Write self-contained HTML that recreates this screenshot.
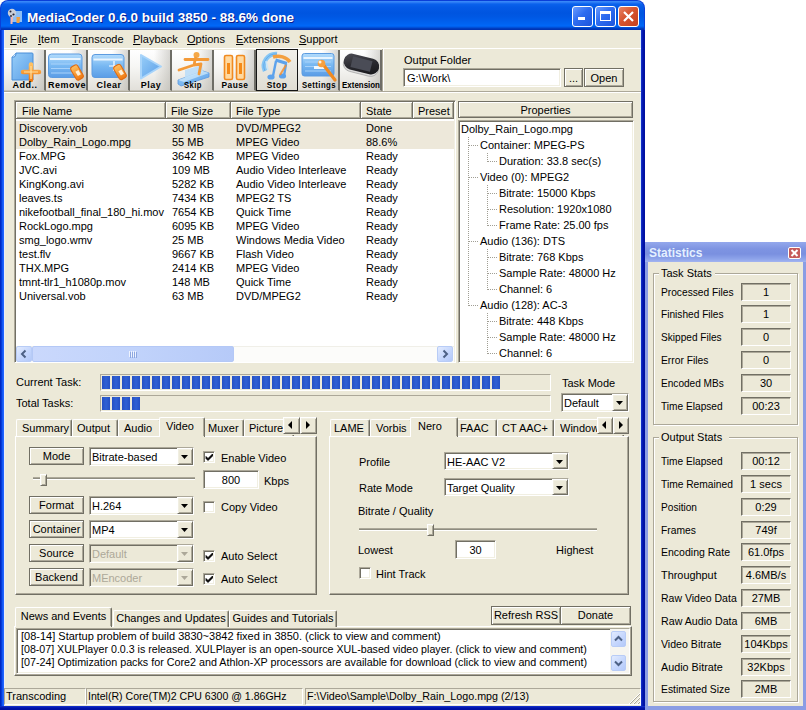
<!DOCTYPE html><html><head><meta charset="utf-8"><style>
html,body{margin:0;padding:0;}body{width:806px;height:710px;overflow:hidden;background:#fff;position:relative;font-family:"Liberation Sans",sans-serif;font-size:11px;color:#000;}
div,span,svg{position:absolute;box-sizing:border-box;}span{white-space:pre;}
</style></head><body>
<div style="left:0px;top:0px;width:645px;height:710px;background:#0A3FD8;border-radius:8px 8px 0 0;"></div>
<div style="left:1px;top:1px;width:643px;height:29px;border-radius:7px 7px 0 0;background:linear-gradient(to bottom,#3C8EFA 0px,#2A7AF4 1.5px,#0A62EC 3px,#045AE6 6px,#0055E0 12px,#0058E4 16px,#0062F0 22px,#0068F8 25px,#0050D8 26.5px,#0034B4 28px);"></div>
<div style="left:0px;top:30px;width:4px;height:680px;background:linear-gradient(to right,#0020C0 0px,#0030C8 1px,#0848E8 2px,#2064FF 3px,#2064FF 4px);"></div>
<div style="left:641px;top:30px;width:4px;height:680px;background:linear-gradient(to right,#1838C8 0px,#0A22C0 1px,#0014A8 2px,#0010A0 4px);"></div>
<div style="left:0px;top:706px;width:645px;height:4px;background:linear-gradient(to bottom,#1838C8 0px,#0A22C0 1px,#0014A8 2px,#0010A0 4px);"></div>
<div style="left:4px;top:30px;width:637px;height:676px;background:#ECE9D8;"></div>
<div style="left:4px;top:30px;width:1px;height:676px;background:#E8ECF8;"></div>
<div style="left:640px;top:30px;width:1px;height:676px;background:#D8ECF8;"></div>
<svg style="left:6px;top:7px" width="18" height="18"><rect x="6" y="4" width="10" height="11" fill="#9CCAF6" opacity="0.9"/><circle cx="6" cy="6" r="4.2" fill="#C9CED8"/><circle cx="4.5" cy="4.5" r="1" fill="#223"/><circle cx="7.5" cy="7.5" r="1.1" fill="#223"/><circle cx="5" cy="9" r="0.9" fill="#223"/><path d="M4.5 10L7 10L6.5 17L4.5 17Z" fill="#F2B8B0"/><path d="M10.5 10L14 10L13.5 16L10.5 16Z" fill="#F0A040"/></svg>
<span style="left:27px;top:11px;font-size:13.5px;line-height:13.5px;font-weight:bold;color:#fff;text-shadow:1px 1px #0A1E8C;">MediaCoder 0.6.0 build 3850 - 88.6% done</span>
<div style="left:572px;top:6px;width:21px;height:21px;border:1px solid #fff;border-radius:3px;background:linear-gradient(135deg,#6A9CFF 0%,#2E6CF0 45%,#1C55DC 100%);"></div>
<div style="left:578px;top:17px;width:7px;height:3px;background:#fff;"></div>
<div style="left:595px;top:6px;width:21px;height:21px;border:1px solid #fff;border-radius:3px;background:linear-gradient(135deg,#6A9CFF 0%,#2E6CF0 45%,#1C55DC 100%);"></div>
<div style="left:600px;top:11px;width:11px;height:10px;border:1px solid #fff;border-top:3px solid #fff;"></div>
<div style="left:618px;top:6px;width:21px;height:21px;border:1px solid #fff;border-radius:3px;background:linear-gradient(135deg,#E88466 0%,#D6542E 45%,#C4401E 100%);"></div>
<svg style="left:618px;top:6px" width="21" height="21"><path d="M6 6L15 15M15 6L6 15" stroke="#fff" stroke-width="2.2"/></svg>
<span style="left:10px;top:34px;font-size:11px;line-height:11px;"><u>F</u>ile</span>
<span style="left:38px;top:34px;font-size:11px;line-height:11px;"><u>I</u>tem</span>
<span style="left:72px;top:34px;font-size:11px;line-height:11px;"><u>T</u>ranscode</span>
<span style="left:133px;top:34px;font-size:11px;line-height:11px;"><u>P</u>layback</span>
<span style="left:187px;top:34px;font-size:11px;line-height:11px;"><u>O</u>ptions</span>
<span style="left:236px;top:34px;font-size:11px;line-height:11px;"><u>E</u>xtensions</span>
<span style="left:299px;top:34px;font-size:11px;line-height:11px;"><u>S</u>upport</span>
<div style="left:4px;top:48px;width:637px;height:1px;background:#fff;"></div>
<div style="left:4px;top:50px;width:42px;height:41px;background:linear-gradient(to right,rgba(255,255,255,0) 0%,rgba(255,255,255,0) 60%,rgba(170,168,160,0.45) 100%),linear-gradient(to bottom,#FFFFFF 0%,#F7F7F5 40%,#E2E0DA 100%);border-right:2px solid #6E6D66;border-bottom:1px solid #C8C5BA;"></div>
<svg style="left:4px;top:49px" width="42" height="42"><defs>
<linearGradient id="gb" x1="0" y1="0" x2="0" y2="1"><stop offset="0" stop-color="#B4DCFC"/><stop offset="0.5" stop-color="#78B8F2"/><stop offset="1" stop-color="#5A9CE6"/></linearGradient>
<linearGradient id="gb2" x1="0" y1="0" x2="1" y2="1"><stop offset="0" stop-color="#98CEF8"/><stop offset="1" stop-color="#5A9EE8"/></linearGradient>
<linearGradient id="go" x1="0" y1="0" x2="0" y2="1"><stop offset="0" stop-color="#FFC060"/><stop offset="1" stop-color="#F07810"/></linearGradient>
<linearGradient id="gp" x1="0" y1="0" x2="1" y2="1"><stop offset="0" stop-color="#505058"/><stop offset="0.5" stop-color="#2A2A30"/><stop offset="1" stop-color="#151518"/></linearGradient>
</defs><path d="M12 4H28Q29 4 29 5V31H8V8Z" fill="url(#gb2)" stroke="#4A8ED8" stroke-width="1"/><path d="M8 8Q12 9 12 4" fill="#CFE6FB" stroke="#4A8ED8" stroke-width="1"/><path d="M19 23H35M27 15.5V31" stroke="url(#go)" stroke-width="4.5" stroke-linecap="round"/><path d="M20 23H34M27 17V30" stroke="#FFE2A0" stroke-width="1.2"/></svg>
<span style="left:-6px;top:81px;font-size:9px;line-height:9px;width:62px;text-align:center;font-weight:bold;letter-spacing:0.5px;transform:scaleX(1);">Add..</span>
<div style="left:46px;top:50px;width:42px;height:41px;background:linear-gradient(to right,rgba(255,255,255,0) 0%,rgba(255,255,255,0) 60%,rgba(170,168,160,0.45) 100%),linear-gradient(to bottom,#FFFFFF 0%,#F7F7F5 40%,#E2E0DA 100%);border-right:2px solid #6E6D66;border-bottom:1px solid #C8C5BA;"></div>
<svg style="left:46px;top:49px" width="42" height="42"><defs>
<linearGradient id="gb" x1="0" y1="0" x2="0" y2="1"><stop offset="0" stop-color="#B4DCFC"/><stop offset="0.5" stop-color="#78B8F2"/><stop offset="1" stop-color="#5A9CE6"/></linearGradient>
<linearGradient id="gb2" x1="0" y1="0" x2="1" y2="1"><stop offset="0" stop-color="#98CEF8"/><stop offset="1" stop-color="#5A9EE8"/></linearGradient>
<linearGradient id="go" x1="0" y1="0" x2="0" y2="1"><stop offset="0" stop-color="#FFC060"/><stop offset="1" stop-color="#F07810"/></linearGradient>
<linearGradient id="gp" x1="0" y1="0" x2="1" y2="1"><stop offset="0" stop-color="#505058"/><stop offset="0.5" stop-color="#2A2A30"/><stop offset="1" stop-color="#151518"/></linearGradient>
</defs><rect x="2.5" y="5" width="33.5" height="23.5" rx="3" fill="url(#gb)" stroke="#5C9BE0" stroke-width="1"/><rect x="4" y="9" width="30.5" height="2" fill="#E8F4FE"/><path d="M5 15H33M5 19.5H33M5 24H30" stroke="#A8D2FA" stroke-width="1"/><rect x="27" y="16" width="8" height="15" rx="2.5" transform="rotate(-30 31 23.5)" fill="url(#go)" stroke="#E06A10" stroke-width="1"/><rect x="30" y="22" width="3.5" height="5" transform="rotate(-30 31 23.5)" fill="#FFF0D8"/></svg>
<span style="left:36px;top:81px;font-size:9px;line-height:9px;width:62px;text-align:center;font-weight:bold;letter-spacing:0.5px;transform:scaleX(1);">Remove</span>
<div style="left:88px;top:50px;width:42px;height:41px;background:linear-gradient(to right,rgba(255,255,255,0) 0%,rgba(255,255,255,0) 60%,rgba(170,168,160,0.45) 100%),linear-gradient(to bottom,#FFFFFF 0%,#F7F7F5 40%,#E2E0DA 100%);border-right:2px solid #6E6D66;border-bottom:1px solid #C8C5BA;"></div>
<svg style="left:88px;top:49px" width="42" height="42"><defs>
<linearGradient id="gb" x1="0" y1="0" x2="0" y2="1"><stop offset="0" stop-color="#B4DCFC"/><stop offset="0.5" stop-color="#78B8F2"/><stop offset="1" stop-color="#5A9CE6"/></linearGradient>
<linearGradient id="gb2" x1="0" y1="0" x2="1" y2="1"><stop offset="0" stop-color="#98CEF8"/><stop offset="1" stop-color="#5A9EE8"/></linearGradient>
<linearGradient id="go" x1="0" y1="0" x2="0" y2="1"><stop offset="0" stop-color="#FFC060"/><stop offset="1" stop-color="#F07810"/></linearGradient>
<linearGradient id="gp" x1="0" y1="0" x2="1" y2="1"><stop offset="0" stop-color="#505058"/><stop offset="0.5" stop-color="#2A2A30"/><stop offset="1" stop-color="#151518"/></linearGradient>
</defs><rect x="4" y="5.5" width="32" height="23" rx="3" fill="url(#gb)" stroke="#5C9BE0" stroke-width="1"/><rect x="5.5" y="9.5" width="29" height="2" fill="#E8F4FE"/><path d="M26 12V22M21 17H31" stroke="#FFFFFF" stroke-width="1.2"/><rect x="28" y="15.5" width="8" height="15" rx="2.5" transform="rotate(-30 32 23)" fill="url(#go)" stroke="#E06A10" stroke-width="1"/><rect x="31" y="21.5" width="3.5" height="5" transform="rotate(-30 32 23)" fill="#FFF0D8"/></svg>
<span style="left:78px;top:81px;font-size:9px;line-height:9px;width:62px;text-align:center;font-weight:bold;letter-spacing:0.5px;transform:scaleX(1);">Clear</span>
<div style="left:130px;top:50px;width:42px;height:41px;background:linear-gradient(to right,rgba(255,255,255,0) 0%,rgba(255,255,255,0) 60%,rgba(170,168,160,0.45) 100%),linear-gradient(to bottom,#FFFFFF 0%,#F7F7F5 40%,#E2E0DA 100%);border-right:2px solid #6E6D66;border-bottom:1px solid #C8C5BA;"></div>
<svg style="left:130px;top:49px" width="42" height="42"><defs>
<linearGradient id="gb" x1="0" y1="0" x2="0" y2="1"><stop offset="0" stop-color="#B4DCFC"/><stop offset="0.5" stop-color="#78B8F2"/><stop offset="1" stop-color="#5A9CE6"/></linearGradient>
<linearGradient id="gb2" x1="0" y1="0" x2="1" y2="1"><stop offset="0" stop-color="#98CEF8"/><stop offset="1" stop-color="#5A9EE8"/></linearGradient>
<linearGradient id="go" x1="0" y1="0" x2="0" y2="1"><stop offset="0" stop-color="#FFC060"/><stop offset="1" stop-color="#F07810"/></linearGradient>
<linearGradient id="gp" x1="0" y1="0" x2="1" y2="1"><stop offset="0" stop-color="#505058"/><stop offset="0.5" stop-color="#2A2A30"/><stop offset="1" stop-color="#151518"/></linearGradient>
</defs><path d="M11 6L31 17.5L11 29.5Z" fill="url(#gb2)" stroke="#A8D4FA" stroke-width="2" stroke-linejoin="round"/></svg>
<span style="left:120px;top:81px;font-size:9px;line-height:9px;width:62px;text-align:center;font-weight:bold;letter-spacing:0.5px;transform:scaleX(1);">Play</span>
<div style="left:172px;top:50px;width:42px;height:41px;background:linear-gradient(to right,rgba(255,255,255,0) 0%,rgba(255,255,255,0) 60%,rgba(170,168,160,0.45) 100%),linear-gradient(to bottom,#FFFFFF 0%,#F7F7F5 40%,#E2E0DA 100%);border-right:2px solid #6E6D66;border-bottom:1px solid #C8C5BA;"></div>
<svg style="left:172px;top:49px" width="42" height="42"><defs>
<linearGradient id="gb" x1="0" y1="0" x2="0" y2="1"><stop offset="0" stop-color="#B4DCFC"/><stop offset="0.5" stop-color="#78B8F2"/><stop offset="1" stop-color="#5A9CE6"/></linearGradient>
<linearGradient id="gb2" x1="0" y1="0" x2="1" y2="1"><stop offset="0" stop-color="#98CEF8"/><stop offset="1" stop-color="#5A9EE8"/></linearGradient>
<linearGradient id="go" x1="0" y1="0" x2="0" y2="1"><stop offset="0" stop-color="#FFC060"/><stop offset="1" stop-color="#F07810"/></linearGradient>
<linearGradient id="gp" x1="0" y1="0" x2="1" y2="1"><stop offset="0" stop-color="#505058"/><stop offset="0.5" stop-color="#2A2A30"/><stop offset="1" stop-color="#151518"/></linearGradient>
</defs><path d="M6 31L31 22L37 24V28L9 37L6 35Z" fill="url(#gb2)" stroke="#5A98E0" stroke-width="0.8"/><path d="M13 21L30 16L31 23L13 29Z" fill="#B8DCF8" opacity="0.85"/><path d="M6 31L31 22L37 24L12 33Z" fill="#D4ECFC" opacity="0.7"/><circle cx="24.5" cy="6" r="3" fill="#F5A848"/><path d="M13 10.5H36M23.5 9L22 16L7 21M22 16L29 15L27 25" stroke="#F39A38" stroke-width="2.8" stroke-linecap="round" stroke-linejoin="round" fill="none"/></svg>
<span style="left:162px;top:81px;font-size:9px;line-height:9px;width:62px;text-align:center;font-weight:bold;letter-spacing:0.5px;transform:scaleX(0.85);">Skip</span>
<div style="left:214px;top:50px;width:42px;height:41px;background:linear-gradient(to right,rgba(255,255,255,0) 0%,rgba(255,255,255,0) 60%,rgba(170,168,160,0.45) 100%),linear-gradient(to bottom,#FFFFFF 0%,#F7F7F5 40%,#E2E0DA 100%);border-right:2px solid #6E6D66;border-bottom:1px solid #C8C5BA;"></div>
<svg style="left:214px;top:49px" width="42" height="42"><defs>
<linearGradient id="gb" x1="0" y1="0" x2="0" y2="1"><stop offset="0" stop-color="#B4DCFC"/><stop offset="0.5" stop-color="#78B8F2"/><stop offset="1" stop-color="#5A9CE6"/></linearGradient>
<linearGradient id="gb2" x1="0" y1="0" x2="1" y2="1"><stop offset="0" stop-color="#98CEF8"/><stop offset="1" stop-color="#5A9EE8"/></linearGradient>
<linearGradient id="go" x1="0" y1="0" x2="0" y2="1"><stop offset="0" stop-color="#FFC060"/><stop offset="1" stop-color="#F07810"/></linearGradient>
<linearGradient id="gp" x1="0" y1="0" x2="1" y2="1"><stop offset="0" stop-color="#505058"/><stop offset="0.5" stop-color="#2A2A30"/><stop offset="1" stop-color="#151518"/></linearGradient>
</defs><rect x="10.5" y="6.5" width="8" height="24" rx="1.5" fill="#FFD9A0" stroke="#F08A20" stroke-width="1.6"/><rect x="22.5" y="6.5" width="8" height="24" rx="1.5" fill="#FFD9A0" stroke="#F08A20" stroke-width="1.6"/><path d="M14.5 14V25M26.5 14V25" stroke="#F58A18" stroke-width="3"/></svg>
<span style="left:204px;top:81px;font-size:9px;line-height:9px;width:62px;text-align:center;font-weight:bold;letter-spacing:0.5px;transform:scaleX(0.93);">Pause</span>
<div style="left:256px;top:49px;width:42px;height:42px;background:linear-gradient(to bottom,#F0EFEA,#E0DDD3);border:1px solid #141414;"></div>
<svg style="left:256px;top:49px" width="42" height="42"><defs>
<linearGradient id="gb" x1="0" y1="0" x2="0" y2="1"><stop offset="0" stop-color="#B4DCFC"/><stop offset="0.5" stop-color="#78B8F2"/><stop offset="1" stop-color="#5A9CE6"/></linearGradient>
<linearGradient id="gb2" x1="0" y1="0" x2="1" y2="1"><stop offset="0" stop-color="#98CEF8"/><stop offset="1" stop-color="#5A9EE8"/></linearGradient>
<linearGradient id="go" x1="0" y1="0" x2="0" y2="1"><stop offset="0" stop-color="#FFC060"/><stop offset="1" stop-color="#F07810"/></linearGradient>
<linearGradient id="gp" x1="0" y1="0" x2="1" y2="1"><stop offset="0" stop-color="#505058"/><stop offset="0.5" stop-color="#2A2A30"/><stop offset="1" stop-color="#151518"/></linearGradient>
</defs><path d="M9 22A12 12 0 0 1 21 5" stroke="#86C6F4" stroke-width="4.5" fill="none"/><path d="M9 22A12 12 0 0 1 21 5" stroke="#4E9AE6" stroke-width="1" fill="none" opacity="0.6"/><path d="M17 8A14 12 0 0 1 34 13" stroke="#F4A040" stroke-width="3.5" fill="none"/><path d="M20 12L17 27M30 15L28 27" stroke="#5CA2EC" stroke-width="2.4"/><path d="M19.5 11L31 14.5" stroke="#5CA2EC" stroke-width="3.2"/><ellipse cx="15" cy="28" rx="3.6" ry="2.6" fill="#5CA2EC"/><ellipse cx="26.5" cy="27" rx="3.6" ry="2.6" fill="#5CA2EC"/><path d="M30 16L24 26" stroke="#F49030" stroke-width="2" opacity="0.85"/><path d="M12 21L10 12" stroke="#C8E6FA" stroke-width="1.5" fill="none"/></svg>
<span style="left:246px;top:81px;font-size:9px;line-height:9px;width:62px;text-align:center;font-weight:bold;letter-spacing:0.5px;transform:scaleX(0.93);">Stop</span>
<div style="left:298px;top:50px;width:42px;height:41px;background:linear-gradient(to right,rgba(255,255,255,0) 0%,rgba(255,255,255,0) 60%,rgba(170,168,160,0.45) 100%),linear-gradient(to bottom,#FFFFFF 0%,#F7F7F5 40%,#E2E0DA 100%);border-right:2px solid #6E6D66;border-bottom:1px solid #C8C5BA;"></div>
<svg style="left:298px;top:49px" width="42" height="42"><defs>
<linearGradient id="gb" x1="0" y1="0" x2="0" y2="1"><stop offset="0" stop-color="#B4DCFC"/><stop offset="0.5" stop-color="#78B8F2"/><stop offset="1" stop-color="#5A9CE6"/></linearGradient>
<linearGradient id="gb2" x1="0" y1="0" x2="1" y2="1"><stop offset="0" stop-color="#98CEF8"/><stop offset="1" stop-color="#5A9EE8"/></linearGradient>
<linearGradient id="go" x1="0" y1="0" x2="0" y2="1"><stop offset="0" stop-color="#FFC060"/><stop offset="1" stop-color="#F07810"/></linearGradient>
<linearGradient id="gp" x1="0" y1="0" x2="1" y2="1"><stop offset="0" stop-color="#505058"/><stop offset="0.5" stop-color="#2A2A30"/><stop offset="1" stop-color="#151518"/></linearGradient>
</defs><rect x="4" y="4.5" width="32" height="22.5" rx="2.5" fill="url(#gb)" stroke="#5C9BE0" stroke-width="1"/><rect x="5.5" y="8" width="29" height="2" fill="#E8F4FE"/><path d="M7 13H33M7 17.5H33M7 22H33" stroke="#A8D2FA" stroke-width="1"/><path d="M16 18.5H27" stroke="#F0F8FF" stroke-width="3"/><path d="M24 14L37 31" stroke="#F08A20" stroke-width="3.2" stroke-linecap="round"/><circle cx="23.5" cy="14.5" r="3.8" fill="#F6A040"/><circle cx="22" cy="13" r="1.5" fill="#FFF2DA"/></svg>
<span style="left:288px;top:81px;font-size:9px;line-height:9px;width:62px;text-align:center;font-weight:bold;letter-spacing:0.5px;transform:scaleX(0.86);">Settings</span>
<div style="left:340px;top:50px;width:42px;height:41px;background:linear-gradient(to right,rgba(255,255,255,0) 0%,rgba(255,255,255,0) 60%,rgba(170,168,160,0.45) 100%),linear-gradient(to bottom,#FFFFFF 0%,#F7F7F5 40%,#E2E0DA 100%);border-right:2px solid #6E6D66;border-bottom:1px solid #C8C5BA;"></div>
<svg style="left:340px;top:49px" width="42" height="42"><defs>
<linearGradient id="gb" x1="0" y1="0" x2="0" y2="1"><stop offset="0" stop-color="#B4DCFC"/><stop offset="0.5" stop-color="#78B8F2"/><stop offset="1" stop-color="#5A9CE6"/></linearGradient>
<linearGradient id="gb2" x1="0" y1="0" x2="1" y2="1"><stop offset="0" stop-color="#98CEF8"/><stop offset="1" stop-color="#5A9EE8"/></linearGradient>
<linearGradient id="go" x1="0" y1="0" x2="0" y2="1"><stop offset="0" stop-color="#FFC060"/><stop offset="1" stop-color="#F07810"/></linearGradient>
<linearGradient id="gp" x1="0" y1="0" x2="1" y2="1"><stop offset="0" stop-color="#505058"/><stop offset="0.5" stop-color="#2A2A30"/><stop offset="1" stop-color="#151518"/></linearGradient>
</defs><g transform="rotate(14 21 17)"><rect x="3" y="9" width="36" height="16" rx="8" fill="#DCDCDC" stroke="#AAAAAA" stroke-width="0.8"/><rect x="3" y="7" width="36" height="16" rx="8" fill="url(#gp)"/><rect x="11" y="9.5" width="20" height="11" fill="#4A4C56"/></g></svg>
<span style="left:330px;top:81px;font-size:9px;line-height:9px;width:62px;text-align:center;font-weight:bold;letter-spacing:0px;transform:scaleX(0.88);">Extension</span>
<div style="left:382px;top:49px;width:1px;height:42px;background:#ACA899;"></div>
<div style="left:383px;top:49px;width:1px;height:42px;background:#fff;"></div>
<div style="left:4px;top:91px;width:637px;height:1px;background:#ACA899;"></div>
<div style="left:4px;top:92px;width:637px;height:1px;background:#fff;"></div>
<span style="left:404px;top:55px;font-size:11px;line-height:11px;">Output Folder</span>
<div style="left:403px;top:68px;width:158px;height:19px;border:1px solid;border-color:#ACA899 #fff #fff #ACA899;box-shadow:inset 1px 1px #716F64,inset -1px -1px #F1EFE2;background:#fff;"></div>
<span style="left:407px;top:73px;font-size:11px;line-height:11px;">G:\Work\</span>
<div style="left:564px;top:68px;width:19px;height:19px;border:1px solid #716F64;box-shadow:inset 1px 1px #fff,inset -1px -1px #ACA899;background:#ECE9D8;"></div>
<span style="left:564px;top:73px;font-size:11px;line-height:11px;width:19px;text-align:center;">...</span>
<div style="left:584px;top:68px;width:40px;height:19px;border:1px solid #716F64;box-shadow:inset 1px 1px #fff,inset -1px -1px #ACA899;background:#ECE9D8;"></div>
<span style="left:584px;top:73px;font-size:11px;line-height:11px;width:40px;text-align:center;">Open</span>
<div style="left:14px;top:100px;width:442px;height:263px;border:1px solid;border-color:#ACA899 #fff #fff #ACA899;box-shadow:inset 1px 1px #716F64,inset -1px -1px #F1EFE2;background:#fff;"></div>
<div style="left:16px;top:102px;width:150px;height:17px;background:#ECE9D8;border-right:1px solid #716F64;border-bottom:1px solid #716F64;box-shadow:inset 1px 1px #fff,inset -1px -1px #ACA899;"></div>
<span style="left:22px;top:106px;font-size:11px;line-height:11px;">File Name</span>
<div style="left:166px;top:102px;width:65px;height:17px;background:#ECE9D8;border-right:1px solid #716F64;border-bottom:1px solid #716F64;box-shadow:inset 1px 1px #fff,inset -1px -1px #ACA899;"></div>
<span style="left:171px;top:106px;font-size:11px;line-height:11px;">File Size</span>
<div style="left:231px;top:102px;width:130px;height:17px;background:#ECE9D8;border-right:1px solid #716F64;border-bottom:1px solid #716F64;box-shadow:inset 1px 1px #fff,inset -1px -1px #ACA899;"></div>
<span style="left:236px;top:106px;font-size:11px;line-height:11px;">File Type</span>
<div style="left:361px;top:102px;width:52px;height:17px;background:#ECE9D8;border-right:1px solid #716F64;border-bottom:1px solid #716F64;box-shadow:inset 1px 1px #fff,inset -1px -1px #ACA899;"></div>
<span style="left:366px;top:106px;font-size:11px;line-height:11px;">State</span>
<div style="left:413px;top:102px;width:41px;height:17px;background:#ECE9D8;border-right:1px solid #716F64;border-bottom:1px solid #716F64;box-shadow:inset 1px 1px #fff,inset -1px -1px #ACA899;"></div>
<span style="left:418px;top:106px;font-size:11px;line-height:11px;">Preset</span>
<div style="left:16px;top:121px;width:438px;height:28px;background:#EDE8DA;"></div>
<span style="left:19px;top:123px;font-size:11px;line-height:11px;">Discovery.vob</span>
<span style="left:172px;top:123px;font-size:11px;line-height:11px;">30 MB</span>
<span style="left:236px;top:123px;font-size:11px;line-height:11px;">DVD/MPEG2</span>
<span style="left:366px;top:123px;font-size:11px;line-height:11px;">Done</span>
<span style="left:19px;top:137px;font-size:11px;line-height:11px;">Dolby_Rain_Logo.mpg</span>
<span style="left:172px;top:137px;font-size:11px;line-height:11px;">55 MB</span>
<span style="left:236px;top:137px;font-size:11px;line-height:11px;">MPEG Video</span>
<span style="left:366px;top:137px;font-size:11px;line-height:11px;">88.6%</span>
<span style="left:19px;top:151px;font-size:11px;line-height:11px;">Fox.MPG</span>
<span style="left:172px;top:151px;font-size:11px;line-height:11px;">3642 KB</span>
<span style="left:236px;top:151px;font-size:11px;line-height:11px;">MPEG Video</span>
<span style="left:366px;top:151px;font-size:11px;line-height:11px;">Ready</span>
<span style="left:19px;top:165px;font-size:11px;line-height:11px;">JVC.avi</span>
<span style="left:172px;top:165px;font-size:11px;line-height:11px;">109 MB</span>
<span style="left:236px;top:165px;font-size:11px;line-height:11px;">Audio Video Interleave</span>
<span style="left:366px;top:165px;font-size:11px;line-height:11px;">Ready</span>
<span style="left:19px;top:179px;font-size:11px;line-height:11px;">KingKong.avi</span>
<span style="left:172px;top:179px;font-size:11px;line-height:11px;">5282 KB</span>
<span style="left:236px;top:179px;font-size:11px;line-height:11px;">Audio Video Interleave</span>
<span style="left:366px;top:179px;font-size:11px;line-height:11px;">Ready</span>
<span style="left:19px;top:193px;font-size:11px;line-height:11px;">leaves.ts</span>
<span style="left:172px;top:193px;font-size:11px;line-height:11px;">7434 KB</span>
<span style="left:236px;top:193px;font-size:11px;line-height:11px;">MPEG2 TS</span>
<span style="left:366px;top:193px;font-size:11px;line-height:11px;">Ready</span>
<span style="left:19px;top:207px;font-size:11px;line-height:11px;">nikefootball_final_180_hi.mov</span>
<span style="left:172px;top:207px;font-size:11px;line-height:11px;">7654 KB</span>
<span style="left:236px;top:207px;font-size:11px;line-height:11px;">Quick Time</span>
<span style="left:366px;top:207px;font-size:11px;line-height:11px;">Ready</span>
<span style="left:19px;top:221px;font-size:11px;line-height:11px;">RockLogo.mpg</span>
<span style="left:172px;top:221px;font-size:11px;line-height:11px;">6095 KB</span>
<span style="left:236px;top:221px;font-size:11px;line-height:11px;">MPEG Video</span>
<span style="left:366px;top:221px;font-size:11px;line-height:11px;">Ready</span>
<span style="left:19px;top:235px;font-size:11px;line-height:11px;">smg_logo.wmv</span>
<span style="left:172px;top:235px;font-size:11px;line-height:11px;">25 MB</span>
<span style="left:236px;top:235px;font-size:11px;line-height:11px;">Windows Media Video</span>
<span style="left:366px;top:235px;font-size:11px;line-height:11px;">Ready</span>
<span style="left:19px;top:249px;font-size:11px;line-height:11px;">test.flv</span>
<span style="left:172px;top:249px;font-size:11px;line-height:11px;">9667 KB</span>
<span style="left:236px;top:249px;font-size:11px;line-height:11px;">Flash Video</span>
<span style="left:366px;top:249px;font-size:11px;line-height:11px;">Ready</span>
<span style="left:19px;top:263px;font-size:11px;line-height:11px;">THX.MPG</span>
<span style="left:172px;top:263px;font-size:11px;line-height:11px;">2414 KB</span>
<span style="left:236px;top:263px;font-size:11px;line-height:11px;">MPEG Video</span>
<span style="left:366px;top:263px;font-size:11px;line-height:11px;">Ready</span>
<span style="left:19px;top:277px;font-size:11px;line-height:11px;">tmnt-tlr1_h1080p.mov</span>
<span style="left:172px;top:277px;font-size:11px;line-height:11px;">148 MB</span>
<span style="left:236px;top:277px;font-size:11px;line-height:11px;">Quick Time</span>
<span style="left:366px;top:277px;font-size:11px;line-height:11px;">Ready</span>
<span style="left:19px;top:291px;font-size:11px;line-height:11px;">Universal.vob</span>
<span style="left:172px;top:291px;font-size:11px;line-height:11px;">63 MB</span>
<span style="left:236px;top:291px;font-size:11px;line-height:11px;">DVD/MPEG2</span>
<span style="left:366px;top:291px;font-size:11px;line-height:11px;">Ready</span>
<div style="left:16px;top:346px;width:438px;height:16px;background:#FCFCFA;border-top:1px solid #F0EFE8;"></div>
<div style="left:16px;top:346px;width:16px;height:16px;border:1px solid #B8CCF6;border-radius:2px;background:linear-gradient(135deg,#E2EBFE 0%,#C3D5FD 60%,#B4C9F9 100%);"></div>
<svg style="left:0;top:0" width="806" height="710"><path d="M25.5 350.5 L22.0 354.0 L25.5 357.5" stroke="#4D6185" stroke-width="2" fill="none"/></svg>
<div style="left:32px;top:346px;width:202px;height:16px;border:1px solid #B4C8F6;border-radius:2px;background:linear-gradient(to right,#CAD8FC,#C1D3FB 50%,#B6CAF8);"></div>
<div style="left:129px;top:351px;width:1px;height:6px;background:#EEF3FE;"></div>
<div style="left:130px;top:352px;width:1px;height:6px;background:#8CA6E0;"></div>
<div style="left:131px;top:351px;width:1px;height:6px;background:#EEF3FE;"></div>
<div style="left:132px;top:352px;width:1px;height:6px;background:#8CA6E0;"></div>
<div style="left:133px;top:351px;width:1px;height:6px;background:#EEF3FE;"></div>
<div style="left:134px;top:352px;width:1px;height:6px;background:#8CA6E0;"></div>
<div style="left:135px;top:351px;width:1px;height:6px;background:#EEF3FE;"></div>
<div style="left:136px;top:352px;width:1px;height:6px;background:#8CA6E0;"></div>
<div style="left:437px;top:346px;width:16px;height:16px;border:1px solid #B8CCF6;border-radius:2px;background:linear-gradient(135deg,#E2EBFE 0%,#C3D5FD 60%,#B4C9F9 100%);"></div>
<svg style="left:0;top:0" width="806" height="710"><path d="M443.5 350.5 L447.0 354.0 L443.5 357.5" stroke="#4D6185" stroke-width="2" fill="none"/></svg>
<div style="left:458px;top:101px;width:175px;height:17px;border:1px solid #716F64;box-shadow:inset 1px 1px #fff,inset -1px -1px #ACA899;background:#ECE9D8;"></div>
<span style="left:458px;top:105px;font-size:11px;line-height:11px;width:175px;text-align:center;">Properties</span>
<div style="left:458px;top:120px;width:176px;height:243px;border:1px solid;border-color:#ACA899 #fff #fff #ACA899;box-shadow:inset 1px 1px #716F64,inset -1px -1px #F1EFE2;background:#fff;"></div>
<span style="left:461px;top:124px;font-size:11px;line-height:11px;">Dolby_Rain_Logo.mpg</span>
<span style="left:480px;top:140px;font-size:11px;line-height:11px;">Container: MPEG-PS</span>
<span style="left:499px;top:156px;font-size:11px;line-height:11px;">Duration: 33.8 sec(s)</span>
<span style="left:480px;top:172px;font-size:11px;line-height:11px;">Video (0): MPEG2</span>
<span style="left:499px;top:188px;font-size:11px;line-height:11px;">Bitrate: 15000 Kbps</span>
<span style="left:499px;top:204px;font-size:11px;line-height:11px;">Resolution: 1920x1080</span>
<span style="left:499px;top:220px;font-size:11px;line-height:11px;">Frame Rate: 25.00 fps</span>
<span style="left:480px;top:236px;font-size:11px;line-height:11px;">Audio (136): DTS</span>
<span style="left:499px;top:252px;font-size:11px;line-height:11px;">Bitrate: 768 Kbps</span>
<span style="left:499px;top:268px;font-size:11px;line-height:11px;">Sample Rate: 48000 Hz</span>
<span style="left:499px;top:284px;font-size:11px;line-height:11px;">Channel: 6</span>
<span style="left:480px;top:300px;font-size:11px;line-height:11px;">Audio (128): AC-3</span>
<span style="left:499px;top:316px;font-size:11px;line-height:11px;">Bitrate: 448 Kbps</span>
<span style="left:499px;top:332px;font-size:11px;line-height:11px;">Sample Rate: 48000 Hz</span>
<span style="left:499px;top:348px;font-size:11px;line-height:11px;">Channel: 6</span>
<div style="left:468px;top:137px;width:1px;height:169px;background:repeating-linear-gradient(to bottom,#A09E94 0 1px,transparent 1px 2px);"></div>
<div style="left:469px;top:145px;width:10px;height:1px;background:repeating-linear-gradient(to right,#A09E94 0 1px,transparent 1px 2px);"></div>
<div style="left:488px;top:161px;width:10px;height:1px;background:repeating-linear-gradient(to right,#A09E94 0 1px,transparent 1px 2px);"></div>
<div style="left:469px;top:177px;width:10px;height:1px;background:repeating-linear-gradient(to right,#A09E94 0 1px,transparent 1px 2px);"></div>
<div style="left:488px;top:193px;width:10px;height:1px;background:repeating-linear-gradient(to right,#A09E94 0 1px,transparent 1px 2px);"></div>
<div style="left:488px;top:209px;width:10px;height:1px;background:repeating-linear-gradient(to right,#A09E94 0 1px,transparent 1px 2px);"></div>
<div style="left:488px;top:225px;width:10px;height:1px;background:repeating-linear-gradient(to right,#A09E94 0 1px,transparent 1px 2px);"></div>
<div style="left:469px;top:241px;width:10px;height:1px;background:repeating-linear-gradient(to right,#A09E94 0 1px,transparent 1px 2px);"></div>
<div style="left:488px;top:257px;width:10px;height:1px;background:repeating-linear-gradient(to right,#A09E94 0 1px,transparent 1px 2px);"></div>
<div style="left:488px;top:273px;width:10px;height:1px;background:repeating-linear-gradient(to right,#A09E94 0 1px,transparent 1px 2px);"></div>
<div style="left:488px;top:289px;width:10px;height:1px;background:repeating-linear-gradient(to right,#A09E94 0 1px,transparent 1px 2px);"></div>
<div style="left:469px;top:305px;width:10px;height:1px;background:repeating-linear-gradient(to right,#A09E94 0 1px,transparent 1px 2px);"></div>
<div style="left:488px;top:321px;width:10px;height:1px;background:repeating-linear-gradient(to right,#A09E94 0 1px,transparent 1px 2px);"></div>
<div style="left:488px;top:337px;width:10px;height:1px;background:repeating-linear-gradient(to right,#A09E94 0 1px,transparent 1px 2px);"></div>
<div style="left:488px;top:353px;width:10px;height:1px;background:repeating-linear-gradient(to right,#A09E94 0 1px,transparent 1px 2px);"></div>
<div style="left:487px;top:153px;width:1px;height:9px;background:repeating-linear-gradient(to bottom,#A09E94 0 1px,transparent 1px 2px);"></div>
<div style="left:487px;top:185px;width:1px;height:41px;background:repeating-linear-gradient(to bottom,#A09E94 0 1px,transparent 1px 2px);"></div>
<div style="left:487px;top:249px;width:1px;height:41px;background:repeating-linear-gradient(to bottom,#A09E94 0 1px,transparent 1px 2px);"></div>
<div style="left:487px;top:313px;width:1px;height:41px;background:repeating-linear-gradient(to bottom,#A09E94 0 1px,transparent 1px 2px);"></div>
<span style="left:16px;top:377px;font-size:11px;line-height:11px;">Current Task:</span>
<span style="left:16px;top:398px;font-size:11px;line-height:11px;">Total Tasks:</span>
<div style="left:100px;top:374px;width:451px;height:17px;border:1px solid;border-color:#ACA899 #fff #fff #ACA899;"></div>
<div style="left:102px;top:376px;width:8px;height:13px;background:linear-gradient(to right,#2550C4,#2F60D4 50%,#2550C4);"></div>
<div style="left:112px;top:376px;width:8px;height:13px;background:linear-gradient(to right,#2550C4,#2F60D4 50%,#2550C4);"></div>
<div style="left:122px;top:376px;width:8px;height:13px;background:linear-gradient(to right,#2550C4,#2F60D4 50%,#2550C4);"></div>
<div style="left:132px;top:376px;width:8px;height:13px;background:linear-gradient(to right,#2550C4,#2F60D4 50%,#2550C4);"></div>
<div style="left:142px;top:376px;width:8px;height:13px;background:linear-gradient(to right,#2550C4,#2F60D4 50%,#2550C4);"></div>
<div style="left:152px;top:376px;width:8px;height:13px;background:linear-gradient(to right,#2550C4,#2F60D4 50%,#2550C4);"></div>
<div style="left:162px;top:376px;width:8px;height:13px;background:linear-gradient(to right,#2550C4,#2F60D4 50%,#2550C4);"></div>
<div style="left:172px;top:376px;width:8px;height:13px;background:linear-gradient(to right,#2550C4,#2F60D4 50%,#2550C4);"></div>
<div style="left:182px;top:376px;width:8px;height:13px;background:linear-gradient(to right,#2550C4,#2F60D4 50%,#2550C4);"></div>
<div style="left:192px;top:376px;width:8px;height:13px;background:linear-gradient(to right,#2550C4,#2F60D4 50%,#2550C4);"></div>
<div style="left:202px;top:376px;width:8px;height:13px;background:linear-gradient(to right,#2550C4,#2F60D4 50%,#2550C4);"></div>
<div style="left:212px;top:376px;width:8px;height:13px;background:linear-gradient(to right,#2550C4,#2F60D4 50%,#2550C4);"></div>
<div style="left:222px;top:376px;width:8px;height:13px;background:linear-gradient(to right,#2550C4,#2F60D4 50%,#2550C4);"></div>
<div style="left:232px;top:376px;width:8px;height:13px;background:linear-gradient(to right,#2550C4,#2F60D4 50%,#2550C4);"></div>
<div style="left:242px;top:376px;width:8px;height:13px;background:linear-gradient(to right,#2550C4,#2F60D4 50%,#2550C4);"></div>
<div style="left:252px;top:376px;width:8px;height:13px;background:linear-gradient(to right,#2550C4,#2F60D4 50%,#2550C4);"></div>
<div style="left:262px;top:376px;width:8px;height:13px;background:linear-gradient(to right,#2550C4,#2F60D4 50%,#2550C4);"></div>
<div style="left:272px;top:376px;width:8px;height:13px;background:linear-gradient(to right,#2550C4,#2F60D4 50%,#2550C4);"></div>
<div style="left:282px;top:376px;width:8px;height:13px;background:linear-gradient(to right,#2550C4,#2F60D4 50%,#2550C4);"></div>
<div style="left:292px;top:376px;width:8px;height:13px;background:linear-gradient(to right,#2550C4,#2F60D4 50%,#2550C4);"></div>
<div style="left:302px;top:376px;width:8px;height:13px;background:linear-gradient(to right,#2550C4,#2F60D4 50%,#2550C4);"></div>
<div style="left:312px;top:376px;width:8px;height:13px;background:linear-gradient(to right,#2550C4,#2F60D4 50%,#2550C4);"></div>
<div style="left:322px;top:376px;width:8px;height:13px;background:linear-gradient(to right,#2550C4,#2F60D4 50%,#2550C4);"></div>
<div style="left:332px;top:376px;width:8px;height:13px;background:linear-gradient(to right,#2550C4,#2F60D4 50%,#2550C4);"></div>
<div style="left:342px;top:376px;width:8px;height:13px;background:linear-gradient(to right,#2550C4,#2F60D4 50%,#2550C4);"></div>
<div style="left:352px;top:376px;width:8px;height:13px;background:linear-gradient(to right,#2550C4,#2F60D4 50%,#2550C4);"></div>
<div style="left:362px;top:376px;width:8px;height:13px;background:linear-gradient(to right,#2550C4,#2F60D4 50%,#2550C4);"></div>
<div style="left:372px;top:376px;width:8px;height:13px;background:linear-gradient(to right,#2550C4,#2F60D4 50%,#2550C4);"></div>
<div style="left:382px;top:376px;width:8px;height:13px;background:linear-gradient(to right,#2550C4,#2F60D4 50%,#2550C4);"></div>
<div style="left:392px;top:376px;width:8px;height:13px;background:linear-gradient(to right,#2550C4,#2F60D4 50%,#2550C4);"></div>
<div style="left:402px;top:376px;width:8px;height:13px;background:linear-gradient(to right,#2550C4,#2F60D4 50%,#2550C4);"></div>
<div style="left:412px;top:376px;width:8px;height:13px;background:linear-gradient(to right,#2550C4,#2F60D4 50%,#2550C4);"></div>
<div style="left:422px;top:376px;width:8px;height:13px;background:linear-gradient(to right,#2550C4,#2F60D4 50%,#2550C4);"></div>
<div style="left:432px;top:376px;width:8px;height:13px;background:linear-gradient(to right,#2550C4,#2F60D4 50%,#2550C4);"></div>
<div style="left:442px;top:376px;width:8px;height:13px;background:linear-gradient(to right,#2550C4,#2F60D4 50%,#2550C4);"></div>
<div style="left:452px;top:376px;width:8px;height:13px;background:linear-gradient(to right,#2550C4,#2F60D4 50%,#2550C4);"></div>
<div style="left:462px;top:376px;width:8px;height:13px;background:linear-gradient(to right,#2550C4,#2F60D4 50%,#2550C4);"></div>
<div style="left:472px;top:376px;width:8px;height:13px;background:linear-gradient(to right,#2550C4,#2F60D4 50%,#2550C4);"></div>
<div style="left:482px;top:376px;width:8px;height:13px;background:linear-gradient(to right,#2550C4,#2F60D4 50%,#2550C4);"></div>
<div style="left:492px;top:376px;width:8px;height:13px;background:linear-gradient(to right,#2550C4,#2F60D4 50%,#2550C4);"></div>
<div style="left:100px;top:395px;width:451px;height:17px;border:1px solid;border-color:#ACA899 #fff #fff #ACA899;"></div>
<div style="left:102px;top:397px;width:8px;height:13px;background:linear-gradient(to right,#2550C4,#2F60D4 50%,#2550C4);"></div>
<div style="left:112px;top:397px;width:8px;height:13px;background:linear-gradient(to right,#2550C4,#2F60D4 50%,#2550C4);"></div>
<div style="left:122px;top:397px;width:8px;height:13px;background:linear-gradient(to right,#2550C4,#2F60D4 50%,#2550C4);"></div>
<div style="left:132px;top:397px;width:8px;height:13px;background:linear-gradient(to right,#2550C4,#2F60D4 50%,#2550C4);"></div>
<span style="left:562px;top:378px;font-size:11px;line-height:11px;">Task Mode</span>
<div style="left:561px;top:393px;width:68px;height:19px;border:1px solid;border-color:#ACA899 #fff #fff #ACA899;box-shadow:inset 1px 1px #716F64,inset -1px -1px #F1EFE2;background:#fff;"></div>
<div style="left:612px;top:394px;width:16px;height:17px;border:1px solid;border-color:#fff #716F64 #716F64 #fff;box-shadow:inset 1px 1px #F1EFE2,inset -1px -1px #ACA899;background:#ECE9D8;"></div>
<svg style="left:616px;top:401px" width="8" height="5"><path d="M0 0h7l-3.5 4z" fill="#000"/></svg>
<span style="left:564px;top:398px;font-size:11px;line-height:11px;">Default</span>
<div style="left:15px;top:436px;width:302px;height:159px;background:#ECE9D8;border-left:1px solid #fff;border-top:1px solid #fff;border-right:1px solid #716F64;border-bottom:1px solid #716F64;box-shadow:inset -1px -1px #ACA899;"></div>
<div style="left:16px;top:419px;width:56px;height:17px;background:#ECE9D8;border-left:1px solid #fff;border-top:1px solid #fff;border-right:1px solid #716F64;box-shadow:inset -1px 0 #ACA899;border-radius:2px 2px 0 0;"></div>
<span style="left:22px;top:423px;font-size:11px;line-height:11px;">Summary</span>
<div style="left:72px;top:419px;width:46px;height:17px;background:#ECE9D8;border-left:1px solid #fff;border-top:1px solid #fff;border-right:1px solid #716F64;box-shadow:inset -1px 0 #ACA899;border-radius:2px 2px 0 0;"></div>
<span style="left:77px;top:423px;font-size:11px;line-height:11px;">Output</span>
<div style="left:118px;top:419px;width:43px;height:17px;background:#ECE9D8;border-left:1px solid #fff;border-top:1px solid #fff;border-right:1px solid #716F64;box-shadow:inset -1px 0 #ACA899;border-radius:2px 2px 0 0;"></div>
<span style="left:124px;top:423px;font-size:11px;line-height:11px;">Audio</span>
<div style="left:203px;top:419px;width:41px;height:17px;background:#ECE9D8;border-left:1px solid #fff;border-top:1px solid #fff;border-right:1px solid #716F64;box-shadow:inset -1px 0 #ACA899;border-radius:2px 2px 0 0;"></div>
<span style="left:208px;top:423px;font-size:11px;line-height:11px;">Muxer</span>
<div style="left:244px;top:419px;width:50px;height:17px;background:#ECE9D8;border-left:1px solid #fff;border-top:1px solid #fff;border-right:1px solid #716F64;box-shadow:inset -1px 0 #ACA899;border-radius:2px 2px 0 0;"></div>
<span style="left:249px;top:423px;font-size:11px;line-height:11px;width:34px;overflow:hidden;">Picture</span>
<div style="left:159px;top:417px;width:46px;height:20px;background:#ECE9D8;border-left:1px solid #fff;border-top:1px solid #fff;border-right:1px solid #716F64;box-shadow:inset -1px 0 #ACA899;border-radius:2px 2px 0 0;border-bottom:none;"></div>
<div style="left:160px;top:436px;width:44px;height:1px;background:#ECE9D8;"></div>
<span style="left:166px;top:421px;font-size:11px;line-height:11px;">Video</span>
<div style="left:329px;top:436px;width:300px;height:159px;background:#ECE9D8;border-left:1px solid #fff;border-top:1px solid #fff;border-right:1px solid #716F64;border-bottom:1px solid #716F64;box-shadow:inset -1px -1px #ACA899;"></div>
<div style="left:330px;top:419px;width:40px;height:17px;background:#ECE9D8;border-left:1px solid #fff;border-top:1px solid #fff;border-right:1px solid #716F64;box-shadow:inset -1px 0 #ACA899;border-radius:2px 2px 0 0;"></div>
<span style="left:334px;top:423px;font-size:11px;line-height:11px;">LAME</span>
<div style="left:370px;top:419px;width:42px;height:17px;background:#ECE9D8;border-left:1px solid #fff;border-top:1px solid #fff;border-right:1px solid #716F64;box-shadow:inset -1px 0 #ACA899;border-radius:2px 2px 0 0;"></div>
<span style="left:376px;top:423px;font-size:11px;line-height:11px;">Vorbis</span>
<div style="left:456px;top:419px;width:41px;height:17px;background:#ECE9D8;border-left:1px solid #fff;border-top:1px solid #fff;border-right:1px solid #716F64;box-shadow:inset -1px 0 #ACA899;border-radius:2px 2px 0 0;"></div>
<span style="left:460px;top:423px;font-size:11px;line-height:11px;">FAAC</span>
<div style="left:497px;top:419px;width:57px;height:17px;background:#ECE9D8;border-left:1px solid #fff;border-top:1px solid #fff;border-right:1px solid #716F64;box-shadow:inset -1px 0 #ACA899;border-radius:2px 2px 0 0;"></div>
<span style="left:502px;top:423px;font-size:11px;line-height:11px;">CT AAC+</span>
<div style="left:554px;top:419px;width:70px;height:17px;background:#ECE9D8;border-left:1px solid #fff;border-top:1px solid #fff;border-right:1px solid #716F64;box-shadow:inset -1px 0 #ACA899;border-radius:2px 2px 0 0;"></div>
<span style="left:560px;top:423px;font-size:11px;line-height:11px;width:37px;overflow:hidden;">Windows Media</span>
<div style="left:410px;top:417px;width:48px;height:20px;background:#ECE9D8;border-left:1px solid #fff;border-top:1px solid #fff;border-right:1px solid #716F64;box-shadow:inset -1px 0 #ACA899;border-radius:2px 2px 0 0;border-bottom:none;"></div>
<div style="left:411px;top:436px;width:46px;height:1px;background:#ECE9D8;"></div>
<span style="left:418px;top:421px;font-size:11px;line-height:11px;">Nero</span>
<div style="left:283px;top:417px;width:34px;height:18px;background:#ECE9D8;"></div>
<div style="left:283px;top:417px;width:17px;height:17px;border:1px solid;border-color:#fff #716F64 #716F64 #fff;box-shadow:inset 1px 1px #F1EFE2,inset -1px -1px #ACA899;background:#ECE9D8;"></div>
<svg style="left:288px;top:421px" width="5" height="8"><path d="M4 0v8L0 4z" fill="#000"/></svg>
<div style="left:300px;top:417px;width:17px;height:17px;border:1px solid;border-color:#fff #716F64 #716F64 #fff;box-shadow:inset 1px 1px #F1EFE2,inset -1px -1px #ACA899;background:#ECE9D8;"></div>
<svg style="left:306px;top:421px" width="5" height="8"><path d="M0 0v8L4 4z" fill="#000"/></svg>
<div style="left:597px;top:417px;width:32px;height:18px;background:#ECE9D8;"></div>
<div style="left:597px;top:417px;width:16px;height:17px;border:1px solid;border-color:#fff #716F64 #716F64 #fff;box-shadow:inset 1px 1px #F1EFE2,inset -1px -1px #ACA899;background:#ECE9D8;"></div>
<svg style="left:602px;top:421px" width="5" height="8"><path d="M4 0v8L0 4z" fill="#000"/></svg>
<div style="left:613px;top:417px;width:16px;height:17px;border:1px solid;border-color:#fff #716F64 #716F64 #fff;box-shadow:inset 1px 1px #F1EFE2,inset -1px -1px #ACA899;background:#ECE9D8;"></div>
<svg style="left:619px;top:421px" width="5" height="8"><path d="M0 0v8L4 4z" fill="#000"/></svg>
<div style="left:29px;top:447px;width:55px;height:18px;border:1px solid #716F64;box-shadow:inset 1px 1px #fff,inset -1px -1px #ACA899;background:#ECE9D8;"></div>
<span style="left:29px;top:451px;font-size:11px;line-height:11px;width:55px;text-align:center;">Mode</span>
<div style="left:89px;top:447px;width:105px;height:19px;border:1px solid;border-color:#ACA899 #fff #fff #ACA899;box-shadow:inset 1px 1px #716F64,inset -1px -1px #F1EFE2;background:#fff;"></div>
<div style="left:177px;top:448px;width:16px;height:17px;border:1px solid;border-color:#fff #716F64 #716F64 #fff;box-shadow:inset 1px 1px #F1EFE2,inset -1px -1px #ACA899;background:#ECE9D8;"></div>
<svg style="left:181px;top:455px" width="8" height="5"><path d="M0 0h7l-3.5 4z" fill="#000"/></svg>
<span style="left:92px;top:452px;font-size:11px;line-height:11px;">Bitrate-based</span>
<div style="left:203px;top:451px;width:12px;height:12px;border:1px solid;border-color:#ACA899 #fff #fff #ACA899;box-shadow:inset 1px 1px #716F64,inset -1px -1px #F1EFE2;background:#fff;"></div>
<svg style="left:203px;top:451px" width="12" height="12"><path d="M3 5.5L5 7.5L9.5 3V5L5 9.5L3 7.5Z" fill="#000" stroke="#000" stroke-width="0.8"/></svg>
<span style="left:221px;top:453px;font-size:11px;line-height:11px;">Enable Video</span>
<div style="left:33px;top:477px;width:162px;height:3px;border-top:1px solid #ACA899;background:#8E8C80;border-bottom:1px solid #fff;"></div>
<div style="left:40px;top:474px;width:7px;height:12px;border:1px solid;border-color:#fff #716F64 #716F64 #fff;box-shadow:inset 1px 1px #F1EFE2,inset -1px -1px #ACA899;background:#ECE9D8;"></div>
<div style="left:203px;top:470px;width:56px;height:19px;border:1px solid;border-color:#ACA899 #fff #fff #ACA899;box-shadow:inset 1px 1px #716F64,inset -1px -1px #F1EFE2;background:#fff;"></div>
<span style="left:203px;top:475px;font-size:11px;line-height:11px;width:56px;text-align:center;">800</span>
<span style="left:264px;top:476px;font-size:11px;line-height:11px;">Kbps</span>
<div style="left:29px;top:496px;width:55px;height:18px;border:1px solid #716F64;box-shadow:inset 1px 1px #fff,inset -1px -1px #ACA899;background:#ECE9D8;"></div>
<span style="left:29px;top:500px;font-size:11px;line-height:11px;width:55px;text-align:center;">Format</span>
<div style="left:89px;top:496px;width:105px;height:19px;border:1px solid;border-color:#ACA899 #fff #fff #ACA899;box-shadow:inset 1px 1px #716F64,inset -1px -1px #F1EFE2;background:#fff;"></div>
<div style="left:177px;top:497px;width:16px;height:17px;border:1px solid;border-color:#fff #716F64 #716F64 #fff;box-shadow:inset 1px 1px #F1EFE2,inset -1px -1px #ACA899;background:#ECE9D8;"></div>
<svg style="left:181px;top:504px" width="8" height="5"><path d="M0 0h7l-3.5 4z" fill="#000"/></svg>
<span style="left:92px;top:501px;font-size:11px;line-height:11px;">H.264</span>
<div style="left:203px;top:501px;width:12px;height:12px;border:1px solid;border-color:#ACA899 #fff #fff #ACA899;box-shadow:inset 1px 1px #716F64,inset -1px -1px #F1EFE2;background:#fff;"></div>
<span style="left:221px;top:502px;font-size:11px;line-height:11px;">Copy Video</span>
<div style="left:29px;top:520px;width:55px;height:18px;border:1px solid #716F64;box-shadow:inset 1px 1px #fff,inset -1px -1px #ACA899;background:#ECE9D8;"></div>
<span style="left:29px;top:524px;font-size:11px;line-height:11px;width:55px;text-align:center;">Container</span>
<div style="left:89px;top:520px;width:105px;height:19px;border:1px solid;border-color:#ACA899 #fff #fff #ACA899;box-shadow:inset 1px 1px #716F64,inset -1px -1px #F1EFE2;background:#fff;"></div>
<div style="left:177px;top:521px;width:16px;height:17px;border:1px solid;border-color:#fff #716F64 #716F64 #fff;box-shadow:inset 1px 1px #F1EFE2,inset -1px -1px #ACA899;background:#ECE9D8;"></div>
<svg style="left:181px;top:528px" width="8" height="5"><path d="M0 0h7l-3.5 4z" fill="#000"/></svg>
<span style="left:92px;top:525px;font-size:11px;line-height:11px;">MP4</span>
<div style="left:29px;top:544px;width:55px;height:18px;border:1px solid #716F64;box-shadow:inset 1px 1px #fff,inset -1px -1px #ACA899;background:#ECE9D8;"></div>
<span style="left:29px;top:548px;font-size:11px;line-height:11px;width:55px;text-align:center;">Source</span>
<div style="left:89px;top:544px;width:105px;height:19px;border:1px solid;border-color:#ACA899 #fff #fff #ACA899;box-shadow:inset 1px 1px #716F64,inset -1px -1px #F1EFE2;background:#ECE9D8;"></div>
<div style="left:177px;top:545px;width:16px;height:17px;border:1px solid;border-color:#fff #716F64 #716F64 #fff;box-shadow:inset 1px 1px #F1EFE2,inset -1px -1px #ACA899;background:#ECE9D8;"></div>
<svg style="left:181px;top:552px" width="8" height="5"><path d="M0 0h7l-3.5 4z" fill="#ACA899"/></svg>
<span style="left:92px;top:549px;font-size:11px;line-height:11px;color:#ACA899">Default</span>
<div style="left:203px;top:550px;width:12px;height:12px;border:1px solid;border-color:#ACA899 #fff #fff #ACA899;box-shadow:inset 1px 1px #716F64,inset -1px -1px #F1EFE2;background:#fff;"></div>
<svg style="left:203px;top:550px" width="12" height="12"><path d="M3 5.5L5 7.5L9.5 3V5L5 9.5L3 7.5Z" fill="#000" stroke="#000" stroke-width="0.8"/></svg>
<span style="left:221px;top:551px;font-size:11px;line-height:11px;">Auto Select</span>
<div style="left:29px;top:568px;width:55px;height:18px;border:1px solid #716F64;box-shadow:inset 1px 1px #fff,inset -1px -1px #ACA899;background:#ECE9D8;"></div>
<span style="left:29px;top:572px;font-size:11px;line-height:11px;width:55px;text-align:center;">Backend</span>
<div style="left:89px;top:568px;width:105px;height:19px;border:1px solid;border-color:#ACA899 #fff #fff #ACA899;box-shadow:inset 1px 1px #716F64,inset -1px -1px #F1EFE2;background:#ECE9D8;"></div>
<div style="left:177px;top:569px;width:16px;height:17px;border:1px solid;border-color:#fff #716F64 #716F64 #fff;box-shadow:inset 1px 1px #F1EFE2,inset -1px -1px #ACA899;background:#ECE9D8;"></div>
<svg style="left:181px;top:576px" width="8" height="5"><path d="M0 0h7l-3.5 4z" fill="#ACA899"/></svg>
<span style="left:92px;top:573px;font-size:11px;line-height:11px;color:#ACA899">MEncoder</span>
<div style="left:203px;top:573px;width:12px;height:12px;border:1px solid;border-color:#ACA899 #fff #fff #ACA899;box-shadow:inset 1px 1px #716F64,inset -1px -1px #F1EFE2;background:#fff;"></div>
<svg style="left:203px;top:573px" width="12" height="12"><path d="M3 5.5L5 7.5L9.5 3V5L5 9.5L3 7.5Z" fill="#000" stroke="#000" stroke-width="0.8"/></svg>
<span style="left:221px;top:574px;font-size:11px;line-height:11px;">Auto Select</span>
<span style="left:359px;top:457px;font-size:11px;line-height:11px;">Profile</span>
<div style="left:444px;top:452px;width:125px;height:18px;border:1px solid;border-color:#ACA899 #fff #fff #ACA899;box-shadow:inset 1px 1px #716F64,inset -1px -1px #F1EFE2;background:#fff;"></div>
<div style="left:552px;top:453px;width:16px;height:16px;border:1px solid;border-color:#fff #716F64 #716F64 #fff;box-shadow:inset 1px 1px #F1EFE2,inset -1px -1px #ACA899;background:#ECE9D8;"></div>
<svg style="left:556px;top:460px" width="8" height="5"><path d="M0 0h7l-3.5 4z" fill="#000"/></svg>
<span style="left:447px;top:457px;font-size:11px;line-height:11px;">HE-AAC V2</span>
<span style="left:359px;top:483px;font-size:11px;line-height:11px;">Rate Mode</span>
<div style="left:444px;top:478px;width:125px;height:18px;border:1px solid;border-color:#ACA899 #fff #fff #ACA899;box-shadow:inset 1px 1px #716F64,inset -1px -1px #F1EFE2;background:#fff;"></div>
<div style="left:552px;top:479px;width:16px;height:16px;border:1px solid;border-color:#fff #716F64 #716F64 #fff;box-shadow:inset 1px 1px #F1EFE2,inset -1px -1px #ACA899;background:#ECE9D8;"></div>
<svg style="left:556px;top:486px" width="8" height="5"><path d="M0 0h7l-3.5 4z" fill="#000"/></svg>
<span style="left:447px;top:483px;font-size:11px;line-height:11px;">Target Quality</span>
<span style="left:358px;top:506px;font-size:11px;line-height:11px;">Bitrate / Quality</span>
<div style="left:359px;top:528px;width:238px;height:3px;border-top:1px solid #ACA899;background:#8E8C80;border-bottom:1px solid #fff;"></div>
<div style="left:427px;top:524px;width:7px;height:12px;border:1px solid;border-color:#fff #716F64 #716F64 #fff;box-shadow:inset 1px 1px #F1EFE2,inset -1px -1px #ACA899;background:#ECE9D8;"></div>
<span style="left:358px;top:545px;font-size:11px;line-height:11px;">Lowest</span>
<div style="left:455px;top:540px;width:41px;height:19px;border:1px solid;border-color:#ACA899 #fff #fff #ACA899;box-shadow:inset 1px 1px #716F64,inset -1px -1px #F1EFE2;background:#fff;"></div>
<span style="left:455px;top:545px;font-size:11px;line-height:11px;width:41px;text-align:center;">30</span>
<span style="left:556px;top:545px;font-size:11px;line-height:11px;">Highest</span>
<div style="left:359px;top:567px;width:12px;height:12px;border:1px solid;border-color:#ACA899 #fff #fff #ACA899;box-shadow:inset 1px 1px #716F64,inset -1px -1px #F1EFE2;background:#fff;"></div>
<span style="left:376px;top:569px;font-size:11px;line-height:11px;">Hint Track</span>
<div style="left:14px;top:626px;width:618px;height:50px;background:#ECE9D8;border-left:1px solid #fff;border-top:1px solid #fff;border-right:1px solid #716F64;border-bottom:1px solid #716F64;box-shadow:inset -1px -1px #ACA899;"></div>
<div style="left:113px;top:610px;width:116px;height:17px;background:#ECE9D8;border-left:1px solid #fff;border-top:1px solid #fff;border-right:1px solid #716F64;box-shadow:inset -1px 0 #ACA899;border-radius:2px 2px 0 0;"></div>
<span style="left:113px;top:613px;font-size:11px;line-height:11px;width:116px;text-align:center;">Changes and Updates</span>
<div style="left:229px;top:610px;width:108px;height:17px;background:#ECE9D8;border-left:1px solid #fff;border-top:1px solid #fff;border-right:1px solid #716F64;box-shadow:inset -1px 0 #ACA899;border-radius:2px 2px 0 0;"></div>
<span style="left:229px;top:613px;font-size:11px;line-height:11px;width:108px;text-align:center;">Guides and Tutorials</span>
<div style="left:15px;top:607px;width:97px;height:20px;background:#ECE9D8;border-left:1px solid #fff;border-top:1px solid #fff;border-right:1px solid #716F64;box-shadow:inset -1px 0 #ACA899;border-radius:2px 2px 0 0;border-bottom:none;"></div>
<div style="left:16px;top:626px;width:95px;height:1px;background:#ECE9D8;"></div>
<span style="left:15px;top:611px;font-size:11px;line-height:11px;width:97px;text-align:center;">News and Events</span>
<div style="left:491px;top:606px;width:70px;height:19px;border:1px solid #716F64;box-shadow:inset 1px 1px #fff,inset -1px -1px #ACA899;background:#ECE9D8;"></div>
<span style="left:491px;top:610px;font-size:11px;line-height:11px;width:70px;text-align:center;">Refresh RSS</span>
<div style="left:560px;top:606px;width:71px;height:19px;border:1px solid #716F64;box-shadow:inset 1px 1px #fff,inset -1px -1px #ACA899;background:#ECE9D8;"></div>
<span style="left:560px;top:610px;font-size:11px;line-height:11px;width:71px;text-align:center;">Donate</span>
<div style="left:16px;top:628px;width:614px;height:46px;border:1px solid;border-color:#ACA899 #fff #fff #ACA899;box-shadow:inset 1px 1px #716F64,inset -1px -1px #F1EFE2;background:#fff;"></div>
<span style="left:21px;top:631px;font-size:11px;line-height:11px;">[08-14] Startup problem of build 3830~3842 fixed in 3850. (click to view and comment)</span>
<span style="left:21px;top:644px;font-size:11px;line-height:11px;transform:scaleX(0.968);transform-origin:0 0;">[08-07] XULPlayer 0.0.3 is released. XULPlayer is an open-source XUL-based video player. (click to view and comment)</span>
<span style="left:21px;top:657px;font-size:11px;line-height:11px;transform:scaleX(0.977);transform-origin:0 0;">[07-24] Optimization packs for Core2 and Athlon-XP processors are available for download (click to view and comment)</span>
<div style="left:610px;top:629px;width:19px;height:44px;background:#F6F5F0;"></div>
<div style="left:611px;top:631px;width:15px;height:16px;border:1px solid #B8CCF6;border-radius:2px;background:linear-gradient(135deg,#E2EBFE 0%,#C3D5FD 60%,#B4C9F9 100%);"></div>
<svg style="left:0;top:0" width="806" height="710"><path d="M615.0 640.5 L618.5 637.0 L622.0 640.5" stroke="#4D6185" stroke-width="2" fill="none"/></svg>
<div style="left:611px;top:655px;width:15px;height:16px;border:1px solid #B8CCF6;border-radius:2px;background:linear-gradient(135deg,#E2EBFE 0%,#C3D5FD 60%,#B4C9F9 100%);"></div>
<svg style="left:0;top:0" width="806" height="710"><path d="M615.0 661.5 L618.5 665.0 L622.0 661.5" stroke="#4D6185" stroke-width="2" fill="none"/></svg>
<div style="left:4px;top:688px;width:82px;height:17px;border-left:1px solid #ACA899;border-top:1px solid #ACA899;border-right:1px solid #fff;border-bottom:1px solid #fff;"></div>
<span style="left:6px;top:691px;font-size:11px;line-height:11px;transform:scaleX(1);transform-origin:0 0;">Transcoding</span>
<div style="left:86px;top:688px;width:217px;height:17px;border-left:1px solid #ACA899;border-top:1px solid #ACA899;border-right:1px solid #fff;border-bottom:1px solid #fff;"></div>
<span style="left:88px;top:691px;font-size:11px;line-height:11px;transform:scaleX(0.96);transform-origin:0 0;">Intel(R) Core(TM)2 CPU 6300 @ 1.86GHz</span>
<div style="left:305px;top:688px;width:336px;height:17px;border-left:1px solid #ACA899;border-top:1px solid #ACA899;border-right:1px solid #fff;border-bottom:1px solid #fff;"></div>
<span style="left:307px;top:691px;font-size:11px;line-height:11px;transform:scaleX(0.974);transform-origin:0 0;">F:\Video\Sample\Dolby_Rain_Logo.mpg (2/13)</span>
<svg style="left:628px;top:692px" width="13" height="13"><path d="M12 1L1 12M12 5L5 12M12 9L9 12" stroke="#fff" stroke-width="1"/><path d="M12 2L2 12M12 6L6 12M12 10L10 12" stroke="#ACA899" stroke-width="1"/></svg>
<div style="left:645px;top:242px;width:161px;height:468px;background:#8A9DE4;"></div>
<div style="left:645px;top:242px;width:161px;height:20px;background:linear-gradient(to bottom,#94A8EC 0%,#7E94E2 35%,#7A90E0 60%,#8EA4EA 85%,#A2B4F0 100%);"></div>
<span style="left:649px;top:247px;font-size:12px;line-height:12px;font-weight:bold;color:#E4F0FF;">Statistics</span>
<div style="left:788px;top:247px;width:13px;height:12px;border:1px solid #fff;border-radius:2px;background:#C65A5A;"></div>
<svg style="left:788px;top:247px" width="13" height="12"><path d="M3.5 3L9.5 9M9.5 3L3.5 9" stroke="#fff" stroke-width="2"/></svg>
<div style="left:648px;top:262px;width:155px;height:444px;background:#ECE9D8;"></div>
<div style="left:653px;top:273px;width:145px;height:152px;border:1px solid #ACA899;box-shadow:inset 1px 1px #fff,1px 1px #fff;"></div>
<div style="left:659px;top:267px;width:56px;height:12px;background:#ECE9D8;"></div>
<span style="left:661px;top:268px;font-size:11px;line-height:11px;">Task Stats</span>
<div style="left:653px;top:437px;width:145px;height:265px;border:1px solid #ACA899;box-shadow:inset 1px 1px #fff,1px 1px #fff;"></div>
<div style="left:659px;top:431px;width:70px;height:12px;background:#ECE9D8;"></div>
<span style="left:661px;top:432px;font-size:11px;line-height:11px;">Output Stats</span>
<span style="left:661px;top:287px;font-size:11px;line-height:11px;transform:scaleX(0.927);transform-origin:0 0;">Processed Files</span>
<div style="left:741px;top:283px;width:50px;height:18px;border:1px solid;border-color:#716F64 #fff #fff #716F64;box-shadow:inset 1px 1px #ACA899;background:#ECE9D8;"></div>
<span style="left:741px;top:287px;font-size:11px;line-height:11px;width:50px;text-align:center;">1</span>
<span style="left:661px;top:309px;font-size:11px;line-height:11px;transform:scaleX(0.922);transform-origin:0 0;">Finished Files</span>
<div style="left:741px;top:305px;width:50px;height:18px;border:1px solid;border-color:#716F64 #fff #fff #716F64;box-shadow:inset 1px 1px #ACA899;background:#ECE9D8;"></div>
<span style="left:741px;top:309px;font-size:11px;line-height:11px;width:50px;text-align:center;">1</span>
<span style="left:661px;top:332px;font-size:11px;line-height:11px;transform:scaleX(0.918);transform-origin:0 0;">Skipped Files</span>
<div style="left:741px;top:328px;width:50px;height:18px;border:1px solid;border-color:#716F64 #fff #fff #716F64;box-shadow:inset 1px 1px #ACA899;background:#ECE9D8;"></div>
<span style="left:741px;top:332px;font-size:11px;line-height:11px;width:50px;text-align:center;">0</span>
<span style="left:661px;top:355px;font-size:11px;line-height:11px;transform:scaleX(0.935);transform-origin:0 0;">Error Files</span>
<div style="left:741px;top:351px;width:50px;height:18px;border:1px solid;border-color:#716F64 #fff #fff #716F64;box-shadow:inset 1px 1px #ACA899;background:#ECE9D8;"></div>
<span style="left:741px;top:355px;font-size:11px;line-height:11px;width:50px;text-align:center;">0</span>
<span style="left:661px;top:378px;font-size:11px;line-height:11px;transform:scaleX(0.917);transform-origin:0 0;">Encoded MBs</span>
<div style="left:741px;top:374px;width:50px;height:18px;border:1px solid;border-color:#716F64 #fff #fff #716F64;box-shadow:inset 1px 1px #ACA899;background:#ECE9D8;"></div>
<span style="left:741px;top:378px;font-size:11px;line-height:11px;width:50px;text-align:center;">30</span>
<span style="left:661px;top:401px;font-size:11px;line-height:11px;transform:scaleX(0.922);transform-origin:0 0;">Time Elapsed</span>
<div style="left:741px;top:397px;width:50px;height:18px;border:1px solid;border-color:#716F64 #fff #fff #716F64;box-shadow:inset 1px 1px #ACA899;background:#ECE9D8;"></div>
<span style="left:741px;top:401px;font-size:11px;line-height:11px;width:50px;text-align:center;">00:23</span>
<span style="left:661px;top:456px;font-size:11px;line-height:11px;transform:scaleX(0.922);transform-origin:0 0;">Time Elapsed</span>
<div style="left:741px;top:452px;width:50px;height:18px;border:1px solid;border-color:#716F64 #fff #fff #716F64;box-shadow:inset 1px 1px #ACA899;background:#ECE9D8;"></div>
<span style="left:741px;top:456px;font-size:11px;line-height:11px;width:50px;text-align:center;">00:12</span>
<span style="left:661px;top:479px;font-size:11px;line-height:11px;transform:scaleX(0.931);transform-origin:0 0;">Time Remained</span>
<div style="left:741px;top:475px;width:50px;height:18px;border:1px solid;border-color:#716F64 #fff #fff #716F64;box-shadow:inset 1px 1px #ACA899;background:#ECE9D8;"></div>
<span style="left:741px;top:479px;font-size:11px;line-height:11px;width:50px;text-align:center;">1 secs</span>
<span style="left:661px;top:502px;font-size:11px;line-height:11px;transform:scaleX(0.92);transform-origin:0 0;">Position</span>
<div style="left:741px;top:498px;width:50px;height:18px;border:1px solid;border-color:#716F64 #fff #fff #716F64;box-shadow:inset 1px 1px #ACA899;background:#ECE9D8;"></div>
<span style="left:741px;top:502px;font-size:11px;line-height:11px;width:50px;text-align:center;">0:29</span>
<span style="left:661px;top:525px;font-size:11px;line-height:11px;transform:scaleX(0.936);transform-origin:0 0;">Frames</span>
<div style="left:741px;top:521px;width:50px;height:18px;border:1px solid;border-color:#716F64 #fff #fff #716F64;box-shadow:inset 1px 1px #ACA899;background:#ECE9D8;"></div>
<span style="left:741px;top:525px;font-size:11px;line-height:11px;width:50px;text-align:center;">749f</span>
<span style="left:661px;top:547px;font-size:11px;line-height:11px;transform:scaleX(0.956);transform-origin:0 0;">Encoding Rate</span>
<div style="left:741px;top:543px;width:50px;height:18px;border:1px solid;border-color:#716F64 #fff #fff #716F64;box-shadow:inset 1px 1px #ACA899;background:#ECE9D8;"></div>
<span style="left:741px;top:547px;font-size:11px;line-height:11px;width:50px;text-align:center;">61.0fps</span>
<span style="left:661px;top:570px;font-size:11px;line-height:11px;transform:scaleX(0.99);transform-origin:0 0;">Throughput</span>
<div style="left:741px;top:566px;width:50px;height:18px;border:1px solid;border-color:#716F64 #fff #fff #716F64;box-shadow:inset 1px 1px #ACA899;background:#ECE9D8;"></div>
<span style="left:741px;top:570px;font-size:11px;line-height:11px;width:50px;text-align:center;">4.6MB/s</span>
<span style="left:661px;top:593px;font-size:11px;line-height:11px;transform:scaleX(0.955);transform-origin:0 0;">Raw Video Data</span>
<div style="left:741px;top:589px;width:50px;height:18px;border:1px solid;border-color:#716F64 #fff #fff #716F64;box-shadow:inset 1px 1px #ACA899;background:#ECE9D8;"></div>
<span style="left:741px;top:593px;font-size:11px;line-height:11px;width:50px;text-align:center;">27MB</span>
<span style="left:661px;top:616px;font-size:11px;line-height:11px;transform:scaleX(0.97);transform-origin:0 0;">Raw Audio Data</span>
<div style="left:741px;top:612px;width:50px;height:18px;border:1px solid;border-color:#716F64 #fff #fff #716F64;box-shadow:inset 1px 1px #ACA899;background:#ECE9D8;"></div>
<span style="left:741px;top:616px;font-size:11px;line-height:11px;width:50px;text-align:center;">6MB</span>
<span style="left:661px;top:639px;font-size:11px;line-height:11px;transform:scaleX(0.963);transform-origin:0 0;">Video Bitrate</span>
<div style="left:741px;top:635px;width:50px;height:18px;border:1px solid;border-color:#716F64 #fff #fff #716F64;box-shadow:inset 1px 1px #ACA899;background:#ECE9D8;"></div>
<span style="left:741px;top:639px;font-size:11px;line-height:11px;width:50px;text-align:center;">104Kbps</span>
<span style="left:661px;top:662px;font-size:11px;line-height:11px;transform:scaleX(0.98);transform-origin:0 0;">Audio Bitrate</span>
<div style="left:741px;top:658px;width:50px;height:18px;border:1px solid;border-color:#716F64 #fff #fff #716F64;box-shadow:inset 1px 1px #ACA899;background:#ECE9D8;"></div>
<span style="left:741px;top:662px;font-size:11px;line-height:11px;width:50px;text-align:center;">32Kbps</span>
<span style="left:661px;top:684px;font-size:11px;line-height:11px;transform:scaleX(0.94);transform-origin:0 0;">Estimated Size</span>
<div style="left:741px;top:680px;width:50px;height:18px;border:1px solid;border-color:#716F64 #fff #fff #716F64;box-shadow:inset 1px 1px #ACA899;background:#ECE9D8;"></div>
<span style="left:741px;top:684px;font-size:11px;line-height:11px;width:50px;text-align:center;">2MB</span>
</body></html>
